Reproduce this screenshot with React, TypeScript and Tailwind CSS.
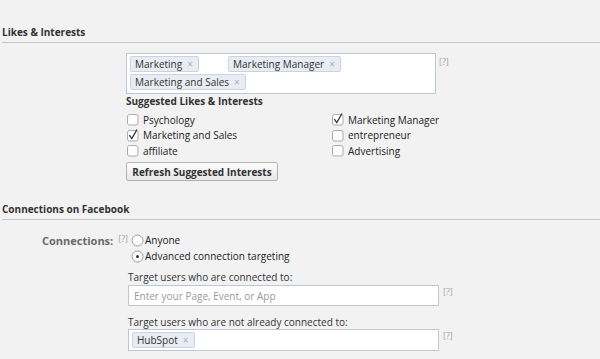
import React from 'react';

const font = { fontFamily: '"Open Sans", "DejaVu Sans", sans-serif' };

const Tag: React.FC<{ label: string }> = ({ label }) => (
    <span className="flex items-center h-[16px] pl-[4px] pr-[5px] rounded-[2px] border border-[#cdd3de] bg-[#e9ecf2] text-[10px] text-[#333] leading-none">
        {label}
        <span className="ml-[5px] text-[#a7afbd] text-[10px] leading-none">×</span>
    </span>
);

const Help = () => <span className="block text-[9px] text-[#a8a8a8] leading-[10px]">[?]</span>;

const Checkbox: React.FC<{ checked?: boolean; label: string }> = ({ checked, label }) => (
    <div className="flex items-center h-[15.5px]">
        <svg width="12" height="13" viewBox="0 0 12 13" className="ml-[1px] mr-[4px] shrink-0">
            <rect x="0.5" y="1.5" width="10.5" height="10.5" rx="2" fill="#fff" stroke="#ababab" />
            {checked && <path d="M2.3 6.2 L4.8 9.6 L10 0.5" fill="none" stroke="#333" strokeWidth="1.3" />}
        </svg>
        <span className="text-[10px] text-[#222] leading-none">{label}</span>
    </div>
);

const Radio: React.FC<{ checked?: boolean; label: string }> = ({ checked, label }) => (
    <div className="flex items-center h-[16px]">
        <svg width="13" height="13" viewBox="0 0 13 13" className="mr-[1px] shrink-0">
            <circle cx="6.5" cy="6.5" r="5.5" fill="#fff" stroke="#9a9a9a" />
            {checked && <circle cx="6.5" cy="6.5" r="1.5" fill="#333" />}
        </svg>
        <span className="text-[10px] text-[#222] leading-none">{label}</span>
    </div>
);

const SectionHeading: React.FC<{ title: string }> = ({ title }) => (
    <div className="ml-[2px] border-b border-[#c6c6c6] pb-[3px]">
        <h3 className="text-[10px] font-bold text-[#333] leading-[14px]">{title}</h3>
    </div>
);

export default function App() {
    return (
        <div className="w-[600px] h-[359px] overflow-hidden bg-[#f2f2f2] leading-none" style={font}>
            <div className="pt-[25px]">
                <SectionHeading title="Likes & Interests" />
            </div>

            <div className="flex items-start pl-[126px] pt-[10px]">
                <div className="w-[310px] h-[41px] border border-[#bdc7d8] bg-white pl-[3px] pt-[2px] flex flex-col gap-[2px]">
                    <div className="flex">
                        <div className="flex w-[98px]"><Tag label="Marketing" /></div>
                        <Tag label="Marketing Manager" />
                    </div>
                    <div className="flex">
                        <Tag label="Marketing and Sales" />
                    </div>
                </div>
                <div className="ml-[3px] pt-[4px]"><Help /></div>
            </div>

            <div className="pl-[126px]">
                <div className="text-[10px] font-bold text-[#333] leading-[14px]">Suggested Likes & Interests</div>
                <div className="grid grid-cols-[205px_1fr] pt-[4px]">
                    <div>
                        <Checkbox label="Psychology" />
                        <Checkbox checked label="Marketing and Sales" />
                        <Checkbox label="affiliate" />
                    </div>
                    <div>
                        <Checkbox checked label="Marketing Manager" />
                        <Checkbox label="entrepreneur" />
                        <Checkbox label="Advertising" />
                    </div>
                </div>
                <button className="block mt-[3.5px] h-[19px] w-[152px] border border-[#b3b3b3] bg-gradient-to-b from-[#fcfcfc] to-[#e8e8e8] rounded-[2px] text-[10px] font-bold text-[#333] leading-none">
                    Refresh Suggested Interests
                </button>
            </div>

            <div className="pt-[21px]">
                <SectionHeading title="Connections on Facebook" />
            </div>

            <div className="flex items-start pt-[12px]">
                <div className="w-[131px] h-[16px] flex items-center justify-end pr-[3px]">
                    <span className="text-[11px] font-bold text-[#6a6a6a] leading-none">Connections:</span>
                    <span className="ml-[5px] -mt-[3px]"><Help /></span>
                </div>
                <div className="flex-1">
                    <Radio label="Anyone" />
                    <Radio checked label="Advanced connection targeting" />
                    <div className="-ml-[3px] pt-[6px]">
                        <div className="text-[10px] text-[#333] leading-[14px]">Target users who are connected to:</div>
                        <div className="flex items-start mt-[1px]">
                            <div className="w-[311px] h-[21px] border border-[#bdc7d8] bg-white px-[5px] flex items-center text-[10px] text-[#9a9a9a]">
                                Enter your Page, Event, or App
                            </div>
                            <div className="ml-[4px] pt-[2px]"><Help /></div>
                        </div>
                        <div className="text-[10px] text-[#333] leading-[14px] mt-[9px]">Target users who are not already connected to:</div>
                        <div className="flex items-start">
                            <div className="w-[311px] h-[22px] border border-[#bdc7d8] bg-white px-[3px] flex items-center">
                                <Tag label="HubSpot" />
                            </div>
                            <div className="ml-[4px] pt-[2px]"><Help /></div>
                        </div>
                    </div>
                </div>
            </div>
        </div>
    );
}
